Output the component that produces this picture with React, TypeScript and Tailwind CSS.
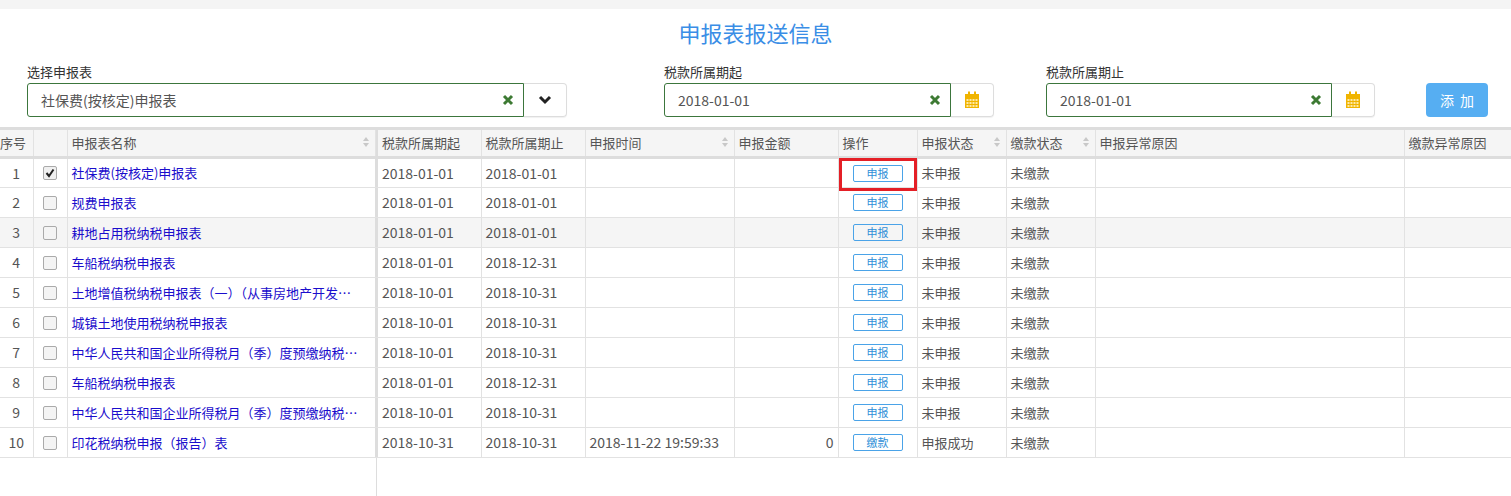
import React from "react";

const rows: [string, string, string, string, string, string, string, string, boolean][] = [
  ["1","社保费(按核定)申报表","2018-01-01","2018-01-01","","","申报","未申报",true],
  ["2","规费申报表","2018-01-01","2018-01-01","","","申报","未申报",false],
  ["3","耕地占用税纳税申报表","2018-01-01","2018-01-01","","","申报","未申报",false],
  ["4","车船税纳税申报表","2018-01-01","2018-12-31","","","申报","未申报",false],
  ["5","土地增值税纳税申报表（一）（从事房地产开发…","2018-10-01","2018-10-31","","","申报","未申报",false],
  ["6","城镇土地使用税纳税申报表","2018-10-01","2018-10-31","","","申报","未申报",false],
  ["7","中华人民共和国企业所得税月（季）度预缴纳税…","2018-10-01","2018-10-31","","","申报","未申报",false],
  ["8","车船税纳税申报表","2018-01-01","2018-12-31","","","申报","未申报",false],
  ["9","中华人民共和国企业所得税月（季）度预缴纳税…","2018-10-01","2018-10-31","","","申报","未申报",false],
  ["10","印花税纳税申报（报告）表","2018-10-31","2018-10-31","2018-11-22 19:59:33","0","缴款","申报成功",false],
];

const widths = [33,34,308,3,103,104,149,104,79,89,89,309,107];

function Sort() {
  return (
    <svg width="8" height="12" viewBox="0 0 8 12" className="absolute right-[5px] top-[6px]">
      <path d="M4 1 L7 5 H1Z" fill="#c8c8c8" />
      <path d="M4 11 L7 7 H1Z" fill="#c8c8c8" />
    </svg>
  );
}

function Cal() {
  return (
    <svg width="16" height="18" viewBox="0 0 16 18">
      <rect x="1" y="3" width="14" height="14" fill="#f0b400" />
      <rect x="4" y="0.5" width="2" height="4" fill="#f0b400" />
      <rect x="10" y="0.5" width="2" height="4" fill="#f0b400" />
      {[0,1,2].map(r=>[0,1,2,3].map(c=>(<rect key={r+"-"+c} x={2.5+c*3} y={8+r*3} width="2" height="2" fill="#fde9a8" />)))}
    </svg>
  );
}

function X() {
  return (
    <svg width="12" height="12" viewBox="0 0 12 12"><path d="M2 2 L10 10 M10 2 L2 10" stroke="#3d7a33" strokeWidth="3" /></svg>
  );
}

function Field({ label, value, w, cal }: { label: string; value: string; w: number; cal?: boolean }) {
  return (
    <div className="flex flex-col">
      <div className="text-[13px] text-[#333] h-[18px] leading-[18px] mb-[2px]">{label}</div>
      <div className="flex">
        <div style={{ width: w }} className="h-[34px] border border-[#3c763d] rounded-l-[3px] flex items-center justify-between pl-[13px] pr-[9px] text-[14px] text-[#555]">
          <span>{value}</span><X />
        </div>
        <div className="h-[34px] w-[43px] border border-l-0 border-[#ddd] rounded-r-[4px] flex items-center justify-center shadow-[0_1px_1px_rgba(0,0,0,0.06)]">
          {cal ? <Cal /> : <svg width="14" height="10" viewBox="0 0 14 10"><path d="M2 2 L7 7 L12 2" stroke="#222" strokeWidth="3" fill="none" /></svg>}
        </div>
      </div>
    </div>
  );
}

export default function App() {
  const hdr = ["序号","","申报表名称","","税款所属期起","税款所属期止","申报时间","申报金额","操作","申报状态","缴款状态","申报异常原因","缴款异常原因"];
  const sortable = [2,6,9,10];
  return (
    <div className="w-[1511px] h-[496px] bg-white overflow-hidden text-[#555]" style={{ fontFamily: '"Noto Sans CJK SC", "Noto Sans", sans-serif' }}>
      <div className="h-[9px] bg-[#f4f4f4]" />
      <div className="text-center text-[22px] text-[#3a8ee6] h-[46px] leading-[46px]">申报表报送信息</div>
      <div className="flex items-start h-[72px] pt-[8px]">
        <div className="ml-[27px]"><Field label="选择申报表" value="社保费(按核定)申报表" w={497} /></div>
        <div className="ml-[97px]"><Field label="税款所属期起" value="2018-01-01" w={287} cal /></div>
        <div className="ml-[52px]"><Field label="税款所属期止" value="2018-01-01" w={286} cal /></div>
        <button className="ml-[51px] mt-[20px] w-[62px] h-[34px] bg-[#56aef2] rounded-[4px] text-white text-[14px] tracking-[6px] pl-[6px]">添加</button>
      </div>
      <table className="border-collapse table-fixed text-[13px] w-[1511px]">
        <colgroup>{widths.map((w,i)=><col key={i} style={{ width: w }} />)}</colgroup>
        <thead>
          <tr className="h-[29px] bg-[#f5f5f5] border-t-[3px] border-b-[3px] border-[#ddd]">
            {hdr.map((h,i)=> i===3 ? <th key={i} className="bg-[#ddd] p-0" /> : (
              <th key={i} className={"relative font-normal text-left px-[4px] border-r border-[#e2e2e2] text-[#555] whitespace-nowrap " + (i===0?"pl-0":"")}>
                {h}{sortable.includes(i) && <Sort />}
              </th>
            ))}
          </tr>
        </thead>
        <tbody>
          {rows.map((r,ri)=>(
            <tr key={ri} className={"h-[30px] border-b border-[#e2e2e2] " + (ri===2?"bg-[#f5f5f5]":"")}>
              <td className="text-center border-r border-[#e2e2e2] text-[14px]">{r[0]}</td>
              <td className="border-r border-[#e2e2e2]">
                <div className={"mx-auto w-[14px] h-[14px] border border-[#aaa] rounded-[2px] flex items-center justify-center " + (r[8]?"bg-[#f0f0f0]":"bg-[#f4f4f4]")}>
                  {r[8] && <svg width="10" height="10" viewBox="0 0 10 10"><path d="M1.5 5 L4 8 L8.5 1.5" stroke="#222" strokeWidth="2" fill="none" /></svg>}
                </div>
              </td>
              <td className="px-[4px] text-[#1a0dcc] whitespace-nowrap overflow-hidden">{r[1]}</td>
              <td className="bg-[#ddd] p-0" />
              <td className="px-[4px] border-r border-[#e2e2e2] text-[14px]">{r[2]}</td>
              <td className="px-[4px] border-r border-[#e2e2e2] text-[14px]">{r[3]}</td>
              <td className="px-[4px] border-r border-[#e2e2e2] text-[14px] whitespace-nowrap">{r[4]}</td>
              <td className="px-[4px] border-r border-[#e2e2e2] text-right text-[14px]">{r[5]}</td>
              <td className="relative border-r border-[#e2e2e2]">
                <div className="mx-auto w-[50px] h-[17px] border border-[#4aa3e8] rounded-[2px] text-[11px] leading-[15px] text-center text-[#2f8fd8]">{r[6]}</div>
                {ri===0 && <div className="absolute left-[0px] top-[-1px] w-[78px] h-[33px] border-[3px] border-[#e41f26]" />}
              </td>
              <td className="px-[4px] border-r border-[#e2e2e2]">{r[7]}</td>
              <td className="px-[4px] border-r border-[#e2e2e2]">未缴款</td>
              <td className="border-r border-[#e2e2e2]" />
              <td />
            </tr>
          ))}
          <tr className="h-[40px]">
            <td colSpan={3} /><td className="p-0"><div className="ml-[1px] w-[1px] h-[40px] bg-[#ddd]" /></td><td colSpan={9} />
          </tr>
        </tbody>
      </table>
    </div>
  );
}
